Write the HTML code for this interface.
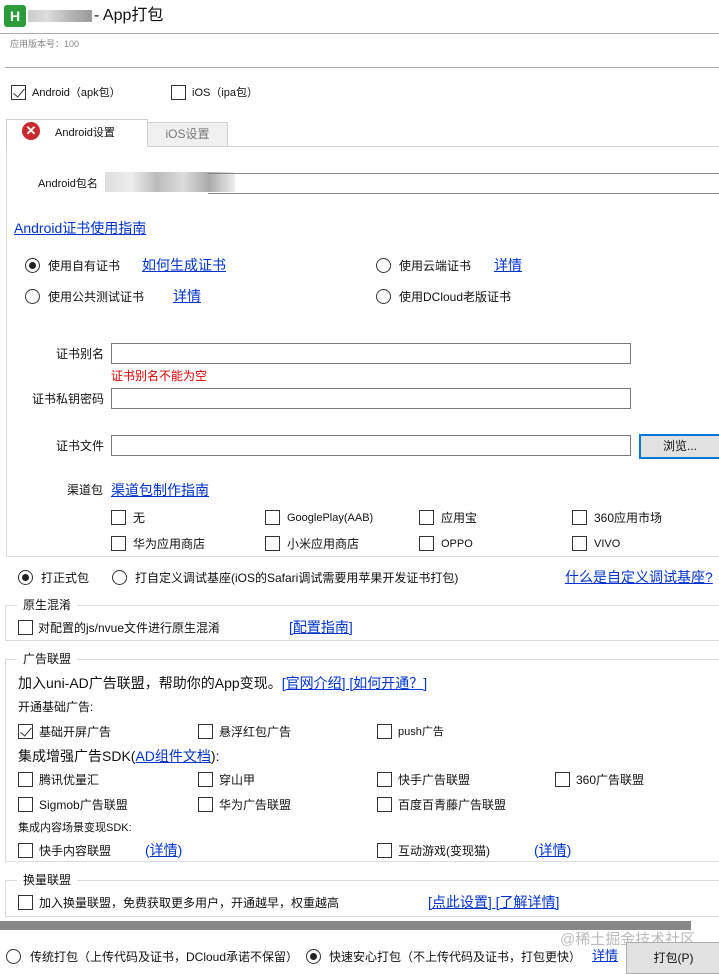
<!DOCTYPE html><html><head><meta charset="utf-8"><style>
*{margin:0;padding:0;box-sizing:border-box}
body{width:719px;height:972px;background:#fff;position:relative;overflow:hidden;font-family:"Liberation Sans","Noto Sans CJK SC",sans-serif;font-size:12px;color:#111}
.a{position:absolute;white-space:nowrap;line-height:16px}
.l{color:#0033cc;text-decoration:underline;font-size:14px;line-height:18px}
.cb{position:absolute;width:15px;height:15px;border:1px solid #333;background:#fff}
.rd{position:absolute;width:15px;height:15px;border:1px solid #333;border-radius:50%;background:#fff}
.rd.on::after{content:"";position:absolute;left:3px;top:3px;width:7px;height:7px;border-radius:50%;background:#222}
.in{position:absolute;height:21px;border:1px solid #7a7a7a;background:#fff}
.hl{position:absolute;height:1px;background:#c8c8c8}
.vl{position:absolute;width:1px;background:#dcdcdc}
.ck::after{content:"";position:absolute;left:4px;top:0px;width:5px;height:10px;border:solid #333;border-width:0 1.5px 1.5px 0;transform:rotate(40deg)}
</style></head><body>
<div class="a" style="left:4px;top:5px;width:22px;height:22px;background:#2d9b3a;border-radius:3px;color:#fff;font-weight:bold;font-size:14px;line-height:22px;text-align:center">H</div>
<div class="a" style="left:28px;top:10px;width:64px;height:12px;background:linear-gradient(90deg,#ccc,#ddd 30%,#bbb 60%,#999)"></div>
<div class="a" style="left:94px;top:5px;font-size:16px;line-height:22px">- App打包</div>
<div class="hl" style="left:0;top:33px;width:719px;background:#aaa"></div>
<div class="a" style="left:10px;top:36px;font-size:9px;color:#888">应用版本号：100</div>
<div class="hl" style="left:5px;top:67px;width:714px;background:#aaa"></div>
<div class="cb ck" style="left:11px;top:85px"></div><div class="a" style="left:32px;top:85px;font-size:11px">Android（apk包）</div>
<div class="cb" style="left:171px;top:85px"></div><div class="a" style="left:192px;top:85px;font-size:11px">iOS（ipa包）</div>
<div class="a" style="left:147px;top:122px;width:81px;height:25px;background:#f0f0f0;border:1px solid #d0d0d0;color:#777;text-align:center;line-height:23px">iOS设置</div>
<div class="a" style="left:6px;top:119px;width:142px;height:28px;background:#fff;border:1px solid #d0d0d0;border-bottom:none"></div>
<div class="a" style="left:22px;top:122px;width:18px;height:18px;border-radius:50%;background:#c8282e;color:#fff;font-weight:bold;text-align:center;line-height:18px;font-size:13px">✕</div>
<div class="a" style="left:55px;top:125px;font-size:11px">Android设置</div>
<div class="hl" style="left:148px;top:146px;width:571px;background:#d0d0d0"></div>
<div class="vl" style="left:6px;top:146px;height:410px"></div>
<div class="hl" style="left:6px;top:556px;width:713px;background:#ddd"></div>
<div class="a" style="left:38px;top:176px;font-size:11px">Android包名</div>
<div class="a" style="left:105px;top:172px;width:130px;height:20px;background:linear-gradient(90deg,#ddd,#eee 20%,#bbb 40%,#ddd 60%,#aaa 80%,#eee)"></div>
<div class="hl" style="left:208px;top:173px;width:511px;background:#888"></div>
<div class="hl" style="left:208px;top:193px;width:511px;background:#888"></div>
<div class="a l" style="left:14px;top:219px">Android证书使用指南</div>
<div class="rd on" style="left:25px;top:258px"></div><div class="a" style="left:48px;top:258px">使用自有证书</div><div class="a l" style="left:142px;top:256px">如何生成证书</div>
<div class="rd" style="left:376px;top:258px"></div><div class="a" style="left:399px;top:258px">使用云端证书</div><div class="a l" style="left:494px;top:256px">详情</div>
<div class="rd" style="left:25px;top:289px"></div><div class="a" style="left:48px;top:289px">使用公共测试证书</div><div class="a l" style="left:173px;top:287px">详情</div>
<div class="rd" style="left:376px;top:289px"></div><div class="a" style="left:399px;top:289px">使用DCloud老版证书</div>
<div class="a" style="left:30px;top:346px;width:74px;text-align:right">证书别名</div><div class="in" style="left:111px;top:343px;width:520px"></div>
<div class="a" style="left:111px;top:368px;color:#d00">证书别名不能为空</div>
<div class="a" style="left:20px;top:391px;width:84px;text-align:right">证书私钥密码</div><div class="in" style="left:111px;top:388px;width:520px"></div>
<div class="a" style="left:30px;top:438px;width:74px;text-align:right">证书文件</div><div class="in" style="left:111px;top:435px;width:520px"></div>
<div class="a" style="left:639px;top:434px;width:82px;height:25px;background:#e1e1e1;border:2px solid #0078d7;line-height:21px;padding-left:22px">浏览...</div>
<div class="a" style="left:67px;top:482px">渠道包</div><div class="a l" style="left:111px;top:481px">渠道包制作指南</div>
<div class="cb" style="left:111px;top:510px"></div><div class="a" style="left:133px;top:510px">无</div>
<div class="cb" style="left:265px;top:510px"></div><div class="a" style="left:287px;top:510px;font-size:11px">GooglePlay(AAB)</div>
<div class="cb" style="left:419px;top:510px"></div><div class="a" style="left:441px;top:510px">应用宝</div>
<div class="cb" style="left:572px;top:510px"></div><div class="a" style="left:594px;top:510px">360应用市场</div>
<div class="cb" style="left:111px;top:536px"></div><div class="a" style="left:133px;top:536px">华为应用商店</div>
<div class="cb" style="left:265px;top:536px"></div><div class="a" style="left:287px;top:536px">小米应用商店</div>
<div class="cb" style="left:419px;top:536px"></div><div class="a" style="left:441px;top:536px;font-size:11px">OPPO</div>
<div class="cb" style="left:572px;top:536px"></div><div class="a" style="left:594px;top:536px;font-size:11px">VIVO</div>
<div class="rd on" style="left:18px;top:570px"></div><div class="a" style="left:41px;top:570px">打正式包</div>
<div class="rd" style="left:112px;top:570px"></div><div class="a" style="left:135px;top:570px">打自定义调试基座(iOS的Safari调试需要用苹果开发证书打包)</div>
<div class="a l" style="left:565px;top:568px">什么是自定义调试基座?</div>
<!-- groups -->
<div class="a" style="left:5px;top:605px;width:720px;height:36px;border:1px solid #dcdcdc"></div>
<div class="a" style="left:17px;top:597px;background:#fff;padding:0 6px">原生混淆</div>
<div class="cb" style="left:18px;top:620px"></div><div class="a" style="left:38px;top:620px">对配置的js/nvue文件进行原生混淆</div><div class="a l" style="left:289px;top:618px">[配置指南]</div>
<div class="a" style="left:5px;top:659px;width:720px;height:203px;border:1px solid #dcdcdc"></div>
<div class="a" style="left:17px;top:651px;background:#fff;padding:0 6px">广告联盟</div>
<div class="a" style="left:18px;top:674px;font-size:14px;line-height:18px">加入uni-AD广告联盟，帮助你的App变现。<span class="l">[官网介绍] [如何开通？]</span></div>
<div class="a" style="left:18px;top:699px">开通基础广告:</div>
<div class="cb ck" style="left:18px;top:724px"></div><div class="a" style="left:39px;top:724px">基础开屏广告</div>
<div class="cb" style="left:198px;top:724px"></div><div class="a" style="left:219px;top:724px">悬浮红包广告</div>
<div class="cb" style="left:377px;top:724px"></div><div class="a" style="left:398px;top:724px;font-size:11px">push广告</div>
<div class="a" style="left:18px;top:747px;font-size:14px;line-height:18px">集成增强广告SDK(<span class="l">AD组件文档</span>):</div>
<div class="cb" style="left:18px;top:772px"></div><div class="a" style="left:39px;top:772px">腾讯优量汇</div>
<div class="cb" style="left:198px;top:772px"></div><div class="a" style="left:219px;top:772px">穿山甲</div>
<div class="cb" style="left:377px;top:772px"></div><div class="a" style="left:398px;top:772px">快手广告联盟</div>
<div class="cb" style="left:555px;top:772px"></div><div class="a" style="left:576px;top:772px">360广告联盟</div>
<div class="cb" style="left:18px;top:797px"></div><div class="a" style="left:39px;top:797px">Sigmob广告联盟</div>
<div class="cb" style="left:198px;top:797px"></div><div class="a" style="left:219px;top:797px">华为广告联盟</div>
<div class="cb" style="left:377px;top:797px"></div><div class="a" style="left:398px;top:797px">百度百青藤广告联盟</div>
<div class="a" style="left:18px;top:820px;font-size:11px">集成内容场景变现SDK:</div>
<div class="cb" style="left:18px;top:843px"></div><div class="a" style="left:39px;top:843px">快手内容联盟</div><div class="a l" style="left:145px;top:841px;text-decoration:none">(<u>详情</u>)</div>
<div class="cb" style="left:377px;top:843px"></div><div class="a" style="left:398px;top:843px">互动游戏(变现猫)</div><div class="a l" style="left:534px;top:841px;text-decoration:none">(<u>详情</u>)</div>
<div class="a" style="left:5px;top:880px;width:720px;height:37px;border:1px solid #dcdcdc"></div>
<div class="a" style="left:17px;top:872px;background:#fff;padding:0 6px">换量联盟</div>
<div class="cb" style="left:18px;top:895px"></div><div class="a" style="left:39px;top:895px">加入换量联盟，免费获取更多用户，开通越早，权重越高</div>
<div class="a l" style="left:428px;top:893px">[点此设置] [了解详情]</div>
<div class="a" style="left:0;top:921px;width:691px;height:9px;background:#888"></div>
<div class="a" style="left:560px;top:930px;font-size:15px;line-height:20px;color:#bbb">@稀土掘金技术社区</div>
<div class="rd" style="left:6px;top:949px"></div><div class="a" style="left:30px;top:949px">传统打包（上传代码及证书，DCloud承诺不保留）</div>
<div class="rd on" style="left:306px;top:949px"></div><div class="a" style="left:329px;top:949px">快速安心打包（不上传代码及证书，打包更快）</div>
<div class="a l" style="left:592px;top:947px;font-size:13px">详情</div>
<div class="a" style="left:626px;top:942px;width:95px;height:32px;background:#e1e1e1;border:1px solid #adadad;text-align:center;line-height:30px">打包(P)</div>
</body></html>
